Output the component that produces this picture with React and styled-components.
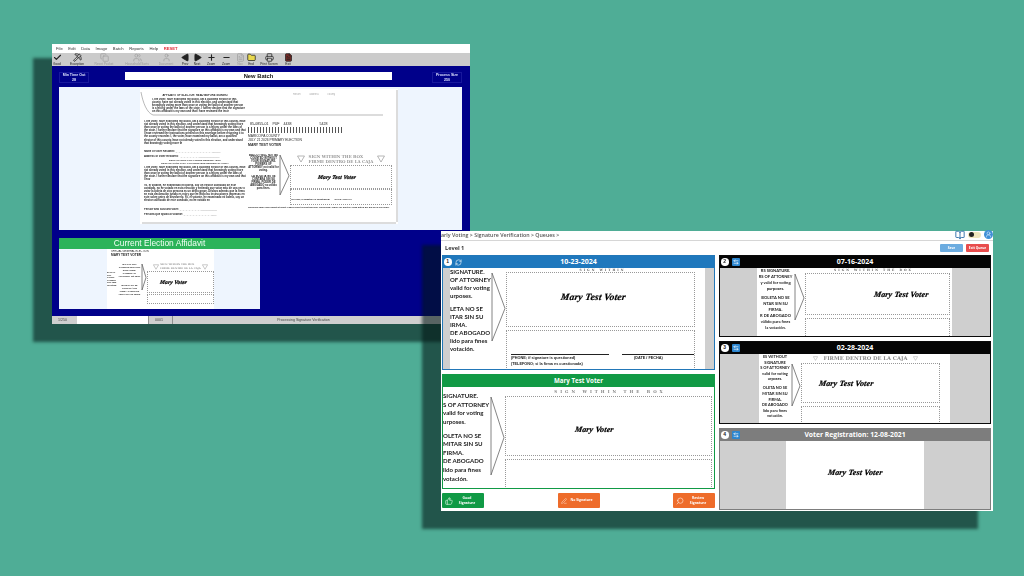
import React from 'react';
import styled, { createGlobalStyle } from 'styled-components';
import {
  ArrowLeftRight,
  BookOpen,
  Check,
  Copy,
  FileText,
  Folder,
  Minus,
  PenLine,
  Pickaxe,
  Play,
  Plus,
  Printer,
  RefreshCw,
  Search,
  ThumbsUp,
  User,
  UserRound,
  Users,
} from 'lucide-react';

const GlobalStyle = createGlobalStyle`
  html, body {
    margin: 0;
    padding: 0;
    background: #4fad96;
    overflow: hidden;
  }
  * {
    box-sizing: border-box;
  }
`;

const Canvas = styled.div`
  position: relative;
  width: 1024px;
  height: 576px;
  background: #4fad96;
  font-family: 'Open Sans', 'Liberation Sans', sans-serif;
  overflow: hidden;
`;

/* the two windows sit on the backdrop like windows on a desktop */
const Window = styled.div`
  position: absolute;
  left: ${(p) => p.$x}px;
  top: ${(p) => p.$y}px;
  width: ${(p) => p.$w}px;
  height: ${(p) => p.$h}px;
  display: flex;
  flex-direction: column;
  background: #fff;
  box-shadow: -17px 16px 3px 2px rgba(2, 22, 20, 0.58);
  filter: blur(0.3px);
`;

/* legacy desktop app */
const MenuBar = styled.div`
  height: 9px;
  flex: none;
  display: flex;
  align-items: center;
  gap: 5.6px;
  padding-left: 4px;
  background: #fff;
  font: 4.2px 'Liberation Sans', sans-serif;
  color: #333;
`;

const MenuItem = styled.span`
  color: ${(p) => (p.$danger ? '#e0323c' : '#333')};
  font-weight: ${(p) => (p.$danger ? 700 : 400)};
`;

const Toolbar = styled.div`
  height: 13px;
  flex: none;
  display: flex;
  background: #cbcbcb;
`;

const ToolButton = styled.div`
  width: 24px;
  flex: none;
  margin-left: ${(p) => p.$shift}px;
  display: flex;
  flex-direction: column;
  align-items: center;
  justify-content: flex-end;
  font: 3.2px/4px 'Liberation Sans', sans-serif;
  white-space: nowrap;
  color: ${(p) => (p.$off ? '#9a9a9a' : '#222')};
`;

const BlueArea = styled.div`
  flex: 1;
  display: flex;
  flex-direction: column;
  padding: 6px 8px 8px 7px;
  background: #00008a;
  min-height: 0;
`;

const BatchHeader = styled.div`
  height: 15px;
  flex: none;
  display: flex;
  align-items: flex-start;
  justify-content: space-between;
`;

const CounterBox = styled.div`
  width: 30px;
  height: 11px;
  display: flex;
  flex-direction: column;
  align-items: center;
  border: 1px solid #18189c;
  color: #dfe4ff;
  font: 700 3.6px/5px 'Liberation Sans', sans-serif;
`;

const BatchTitle = styled.div`
  width: 267px;
  height: 8px;
  margin-right: 4px;
  background: #fff;
  color: #111;
  text-align: center;
  font: 700 5.8px/8px 'Liberation Sans', sans-serif;
`;

const DocArea = styled.div`
  height: 143px;
  flex: none;
  padding: 2px 0 0 81px;
  background: #eef5fe;
`;

const Page = styled.div`
  position: relative;
  width: 258px;
  height: 135px;
  display: flex;
  gap: 2px;
  padding: 4px 6px 2px 4px;
  background: #fff;
  overflow: hidden;
  filter: blur(0.2px);
`;

const Flap = styled.svg`
  position: absolute;
  left: 0;
  top: 0;
`;

const PageLeft = styled.div`
  width: 102px;
  flex: none;
  display: flex;
  flex-direction: column;
  gap: 1px;
`;

const PageRight = styled.div`
  flex: 1;
  display: flex;
  flex-direction: column;
  min-width: 0;
`;

const Fine = styled.div`
  height: ${(p) => p.$h}px;
  flex: none;
  margin-left: ${(p) => p.$inset || 0}px;
  margin-top: ${(p) => p.$top || 0}px;
  overflow: hidden;
  font: ${(p) => p.$weight || 700} ${(p) => p.$size || 2.7}px/${(p) => p.$lh || 3.1}px 'Liberation Sans', sans-serif;
  text-align: ${(p) => p.$align || 'left'};
  white-space: ${(p) => (p.$nowrap ? 'nowrap' : 'normal')};
  word-spacing: ${(p) => p.$words || 0}px;
  color: ${(p) => p.$color || '#222'};
`;

const GapSpan = styled.span`
  margin-left: ${(p) => p.$gap}px;
`;

const Barcode = styled.div`
  width: 96px;
  height: 6px;
  margin-top: 1px;
  background: repeating-linear-gradient(90deg, #555 0 1px, #fff 1px 1.6px, #444 1.6px 2.2px, #fff 2.2px 3px);
`;

const SignRow = styled.div`
  display: flex;
  margin-top: 6px;
`;

const SignNote = styled.div`
  width: ${(p) => p.$w}px;
  flex: none;
  display: flex;
  flex-direction: column;
  gap: 3px;
`;

const SignBoxColumn = styled.div`
  flex: 1;
  display: flex;
  flex-direction: column;
  align-items: center;
`;

const CaptionRow = styled.div`
  display: flex;
  gap: ${(p) => p.$gap}px;
  align-items: center;
`;

const BoxCaption = styled.div`
  font: 700 ${(p) => p.$size || 4}px/${(p) => (p.$size || 4) + 1}px 'DejaVu Serif', 'Liberation Serif', serif;
  color: #9a9a9a;
  white-space: nowrap;
`;

const SignBox = styled.div`
  display: ${(p) => (p.$block ? 'block' : 'flex')};
  align-items: center;
  justify-content: ${(p) => p.$justify || 'center'};
  padding: ${(p) => p.$padTop || 0}px ${(p) => p.$pad || 0}px 0;
  width: 100%;
  height: ${(p) => p.$h}px;
  flex: none;
  margin-top: ${(p) => p.$top || 0}px;
  background: #fff;
  border: 1.5px dotted #999;
  overflow: hidden;
`;

const Signature = styled.span`
  font: italic 700 ${(p) => p.$size}px 'Liberation Serif', serif;
  -webkit-text-stroke: 0.22px #000;
  letter-spacing: 0.02em;
  white-space: nowrap;
  color: #000;
  margin-top: ${(p) => p.$dy || 0}px;
  transform: skewX(-8deg);
`;

const ThumbPanel = styled.div`
  width: 201px;
  height: 71px;
  margin-top: 8px;
  flex: none;
  display: flex;
  flex-direction: column;
  background: #eef5fe;
  overflow: hidden;
`;

const ThumbHeader = styled.div`
  height: 11px;
  flex: none;
  background: #2cb35a;
  color: #f2fff5;
  text-align: center;
  font: 8.4px/11px 'Liberation Sans', sans-serif;
`;

const ThumbPage = styled.div`
  width: 107px;
  height: 60px;
  margin-left: 48px;
  padding-top: 1px;
  background: #fff;
  overflow: hidden;
`;

const ThumbRow = styled.div`
  display: flex;
  margin-top: 5px;
`;

const StatusBar = styled.div`
  height: 8px;
  flex: none;
  display: flex;
  align-items: stretch;
  background: #cfcfcf;
  color: #444;
  font: 3.6px/8px 'Liberation Sans', sans-serif;
`;

const StatusCell = styled.div`
  width: ${(p) => (p.$w ? `${p.$w}px` : 'auto')};
  flex: ${(p) => (p.$w ? 'none' : 1)};
  background: ${(p) => (p.$white ? '#fff' : 'transparent')};
  border-left: ${(p) => (p.$rule ? '1px solid #8f8f8f' : 'none')};
  padding-left: ${(p) => p.$pad || 0}px;
  padding-right: ${(p) => p.$padEnd || 0}px;
  text-align: ${(p) => (p.$center ? 'center' : 'left')};
`;

/* web queue app */
const CrumbBar = styled.div`
  height: 10px;
  flex: none;
  display: flex;
  align-items: center;
  justify-content: space-between;
  border-bottom: 1px solid #d6d6d6;
  color: #555;
  font: 600 5.3px/9px 'Open Sans', sans-serif;
  white-space: nowrap;
`;

const CrumbTools = styled.div`
  display: flex;
  align-items: center;
  gap: 3px;
  margin-top: -2px;
`;

const ThemePill = styled.span`
  width: 13px;
  height: 6px;
  border-radius: 3px;
  background: #efe6bd;
  display: flex;
  align-items: center;
  padding-left: 1px;
`;

const PillKnob = styled.span`
  width: 5px;
  height: 5px;
  border-radius: 50%;
  background: #222;
`;

const UserDot = styled.span`
  width: 9px;
  height: 9px;
  border-radius: 50%;
  background: #3f8fd6;
  display: flex;
  align-items: center;
  justify-content: center;
`;

const LevelRow = styled.div`
  height: 14px;
  flex: none;
  display: flex;
  align-items: center;
  justify-content: space-between;
  padding: 0 4px;
`;

const LevelLabel = styled.div`
  font: 700 5.6px 'Open Sans', sans-serif;
  color: #333;
`;

const HeaderActions = styled.div`
  display: flex;
  gap: 3px;
`;

const SmallAction = styled.div`
  width: 23px;
  height: 8px;
  border-radius: 1px;
  background: ${(p) => p.$bg};
  color: #fff;
  text-align: center;
  font: 700 3.2px/8px 'Open Sans', sans-serif;
`;

const QueueGrid = styled.div`
  flex: 1;
  display: grid;
  grid-template-columns: 273px 272px;
  column-gap: 4px;
  padding-left: 1px;
  min-height: 0;
`;

const QueueColumn = styled.div`
  display: flex;
  flex-direction: column;
  gap: 4px;
`;

const Panel = styled.div`
  height: ${(p) => p.$h}px;
  flex: none;
  display: flex;
  flex-direction: column;
  border: ${(p) => p.$edge || 1}px solid ${(p) => p.$tone};
  background: #cfcfcf;
  overflow: hidden;
`;

const PanelHeader = styled.div`
  position: relative;
  height: 12px;
  flex: none;
  background: ${(p) => p.$tone};
  color: #fff;
  text-align: center;
  font: 700 ${(p) => p.$size || 6.6}px/12px 'Open Sans', sans-serif;
`;

const HeaderBadges = styled.div`
  position: absolute;
  left: 1px;
  top: 2px;
  display: flex;
  gap: 3px;
`;

const NumberBadge = styled.span`
  width: 7.5px;
  height: 7.5px;
  border-radius: 50%;
  background: #fff;
  color: #222;
  text-align: center;
  font: 700 5px/7.5px 'Liberation Sans', sans-serif;
`;

const SwapBadge = styled.span`
  width: 8px;
  height: 8px;
  border-radius: 1px;
  background: ${(p) => (p.$plain ? 'transparent' : '#2d86cf')};
  display: flex;
  align-items: center;
  justify-content: center;
`;

const PanelBody = styled.div`
  flex: 1;
  min-height: 0;
  display: flex;
  justify-content: center;
  padding: 0 ${(p) => p.$right || 0}px 0 ${(p) => p.$left || 0}px;
`;

const Scan = styled.div`
  flex: 1;
  min-width: 0;
  display: flex;
  flex-direction: column;
  align-items: ${(p) => (p.$center ? 'center' : 'stretch')};
  justify-content: ${(p) => (p.$center ? 'center' : 'flex-start')};
  background: #fff;
  overflow: hidden;
  padding-right: ${(p) => p.$pad || 0}px;
`;

const ScanTop = styled.div`
  height: ${(p) => p.$h}px;
  flex: none;
  overflow: hidden;
  display: flex;
  align-items: center;
  justify-content: center;
  gap: 6px;
  padding-left: ${(p) => p.$shift || 0}px;
  white-space: nowrap;
  letter-spacing: ${(p) => p.$spacing || 0}px;
  color: ${(p) => p.$color || '#666'};
  font: 700 ${(p) => p.$size}px/${(p) => p.$h}px 'DejaVu Serif', 'Liberation Serif', serif;
`;

const ScanRow = styled.div`
  flex: 1;
  min-height: 0;
  display: flex;
`;

const Instructions = styled.div`
  width: ${(p) => p.$w}px;
  flex: none;
  margin-top: ${(p) => p.$top || 0}px;
  font: 700 ${(p) => p.$size}px/${(p) => p.$lh}px 'Lato', 'Open Sans', sans-serif;
  color: #222;
  white-space: nowrap;
  text-align: ${(p) => p.$align || 'left'};
`;

const InstructionGap = styled.div`
  height: ${(p) => p.$h}px;
`;

const ArrowMark = styled.svg`
  flex: none;
`;

const BoxStack = styled.div`
  flex: 1;
  min-width: 0;
  display: flex;
  flex-direction: column;
`;

const PhoneRow = styled.div`
  display: flex;
  justify-content: space-between;
  padding-left: 4px;
  font: 700 3.8px/6px 'Liberation Sans', sans-serif;
  color: #222;
`;

const PhoneCell = styled.div`
  width: ${(p) => p.$w}px;
  border-top: 0.8px solid #222;
  padding-left: ${(p) => p.$inset || 0}px;
  white-space: nowrap;
`;

const FooterBar = styled.div`
  display: flex;
  justify-content: space-between;
  height: 15px;
  width: 273px;
`;

const DecisionButton = styled.div`
  width: 42px;
  height: 15px;
  display: flex;
  align-items: center;
  justify-content: space-between;
  padding: 0 3px;
  border-radius: 1px;
  background: ${(p) => p.$bg};
  color: #fff;
  text-align: center;
  font: 700 3.4px/4.8px 'Open Sans', sans-serif;
`;

const DecisionLabel = styled.span`
  flex: 1;
`;

const tools = [
  { c: 57, label: 'Good', Icon: Check, stroke: 3 },
  { c: 77, label: 'Exception', Icon: Pickaxe },
  { c: 104, label: 'Reset Pocket', Icon: Copy, off: true },
  { c: 137, label: 'Household Sorts', Icon: Users, off: true },
  { c: 166, label: 'Document', Icon: User, off: true },
  { c: 185, label: 'Prev', Icon: Play, flip: true, fill: true },
  { c: 197, label: 'Next', Icon: Play, fill: true },
  { c: 211, label: 'Zoom', Icon: Plus, stroke: 3 },
  { c: 226, label: 'Zoom', Icon: Minus, stroke: 3 },
  { c: 240, label: 'Nav', Icon: FileText, off: true },
  { c: 251, label: 'End', Icon: Folder, tint: '#e8d84f' },
  { c: 269, label: 'Print Screen', Icon: Printer },
  { c: 288, label: 'Exit', Icon: FileText, tint: '#7a2b26' },
];

const oath =
  'I, the voter, have examined my ballot, am a qualified elector of this county, have not already voted in this election, and understand that knowingly voting more than once or voting the ballot of another person is a felony under the laws of the state. I further declare that the signature on this affidavit is my own and that I have reviewed the instructions printed on this envelope before returning it to the county recorder. ';

const spanishOath =
  'Yo, el votante, he examinado mi boleta, soy un elector calificado de este condado, no he votado en esta elección y entiendo que votar más de una vez o votar la boleta de otra persona es un delito grave. Declaro además que la firma en esta declaración jurada es mía y que he leído las instrucciones impresas en este sobre antes de devolverlo. ';

// take as many characters as the block on the scan has room for
const fill = (text, n) => text.repeat(Math.ceil(n / text.length)).slice(0, n);

const Arrow = ({ w, h }) => (
  <ArrowMark width={w} height={h} viewBox={`0 0 ${w} ${h}`}>
    <path d={`M1 1 L${w - 1} ${h * 0.52} L1 ${h - 1} Z`} fill="none" stroke="#666" strokeWidth="0.8" />
  </ArrowMark>
);

const Triangle = ({ size = 8 }) => (
  <svg width={size} height={size} viewBox="0 0 8 8">
    <path d="M0.5 1 H7.5 L4 7 Z" fill="none" stroke="#999" strokeWidth="0.7" />
  </svg>
);

const Badges = ({ n, plain }) => (
  <HeaderBadges>
    <NumberBadge>{n}</NumberBadge>
    <SwapBadge $plain={plain}>
      {plain ? <RefreshCw size={7} color="#fff" /> : <ArrowLeftRight size={6} color="#fff" strokeWidth={2.5} />}
    </SwapBadge>
  </HeaderBadges>
);

// cropped scan of the signature part of an envelope
const SigCrop = ({ lines, spacer, align, textW, textSize, lh, textTop, arrowW, arrowH, boxH, box2H, top, sigSize, sigDy, name = 'Mary Test Voter', justify, pad, boxPad, phone }) => (
  <Scan $pad={boxPad}>
    {top}
    <ScanRow>
      <Instructions $w={textW} $size={textSize} $lh={lh} $top={textTop} $align={align}>
        {lines.map((l, i) => (
          <React.Fragment key={l}>
            {i === spacer && <InstructionGap $h={lh * 0.6} />}
            <div>{l}</div>
          </React.Fragment>
        ))}
      </Instructions>
      <Arrow w={arrowW} h={arrowH} />
      <BoxStack>
        <SignBox $h={boxH} $justify={justify} $pad={pad}>
          <Signature $size={sigSize} $dy={sigDy}>{name}</Signature>
        </SignBox>
        <SignBox $h={box2H} $top={3} $block $padTop={box2H - 17}>
          {phone && (
            <PhoneRow>
              <PhoneCell $w={98}>
                (PHONE; if signature is questioned)
                <br />
                (TELEFONO; si la firma es cuestionada)
              </PhoneCell>
              <PhoneCell $w={72} $inset={12}>(DATE / FECHA)</PhoneCell>
            </PhoneRow>
          )}
        </SignBox>
      </BoxStack>
    </ScanRow>
  </Scan>
);

const BatchWindow = () => (
  <Window $x={52} $y={44} $w={418} $h={280}>
    <MenuBar>
      {['File', 'Edit', 'Data', 'Image', 'Batch', 'Reports', 'Help'].map((m) => (
        <MenuItem key={m}>{m}</MenuItem>
      ))}
      <MenuItem $danger>RESET</MenuItem>
    </MenuBar>
    <Toolbar>
      {tools.map(({ c, label, Icon, stroke, off, flip, fill: solid, tint }, i) => (
        <ToolButton key={`${label}${c}`} $shift={i === 0 ? c - 52 - 12 : c - tools[i - 1].c - 24} $off={off}>
          <Icon
            size={9}
            strokeWidth={stroke || 2}
            color={off ? '#a0a0a0' : '#222'}
            fill={solid ? '#222' : tint || 'none'}
            transform={flip ? 'scale(-1 1)' : undefined}
          />
          {label}
        </ToolButton>
      ))}
    </Toolbar>
    <BlueArea>
      <BatchHeader>
        <CounterBox>
          <span>Min Time Out</span>
          <span>28</span>
        </CounterBox>
        <BatchTitle>New Batch</BatchTitle>
        <CounterBox>
          <span>Process Size</span>
          <span>250</span>
        </CounterBox>
      </BatchHeader>
      <DocArea>
        <Page>
          <Flap width="258" height="135" viewBox="0 0 258 135">
            <path
              d="M1 3 C3 14 7 24 13 26 H243 M257 1 V133 M2 134 H256"
              fill="none"
              stroke="#8a8a8a"
              strokeWidth="0.6"
            />
          </Flap>
          <PageLeft>
            <Fine $h={3} $size={2.7} $align="center" $top={1}>
              AFFIDAVIT OF ELECTOR: READ BEFORE SIGNING
            </Fine>
            <Fine $h={19} $inset={8}>{fill(oath, 350)}</Fine>
            <Fine $h={28} $top={2}>{fill(oath, 590)}</Fine>
            <Fine $h={3} $top={1} $nowrap>Name of Voter Resident: ______________________________</Fine>
            <Fine $h={3} $top={1} $nowrap>Address of Voter Resident: ___________________________</Fine>
            <Fine $h={6} $align="center" $size={2.4}>
              DECLARATION FOR VOTERS NEEDING HELP
              <br />
              DECLARACIÓN PARA VOTANTES QUE NECESITAN AYUDA
            </Fine>
            <Fine $h={15.6}>{fill(oath, 330)}</Fine>
            <Fine $h={22} $top={1}>{fill(spanishOath, 440)}</Fine>
            <Fine $h={3} $top={1} $nowrap>Person who assisted voter: _________________________</Fine>
            <Fine $h={3} $top={1} $nowrap>Persona que ayudó al votante: ______________________</Fine>
          </PageLeft>
          <PageRight>
            <Fine $h={29} $inset={45} $size={2.6} $weight={400} $color="#aaa" $nowrap $words={8}>
              Return address county
            </Fine>
            <Fine $h={4} $size={3.6} $lh={4} $nowrap $inset={2} $weight={400} $words={3}>
              85-0855-01 PUF 4438 <GapSpan $gap={24}>5428</GapSpan>
            </Fine>
            <Barcode />
            <Fine $h={4} $size={3.3} $lh={4} $nowrap $top={1} $weight={400}>MARICOPA COUNTY</Fine>
            <Fine $h={4} $size={3.3} $lh={4} $nowrap $weight={400}>JULY 21 2026 PRIMARY ELECTION</Fine>
            <Fine $h={5} $size={3.5} $lh={5} $nowrap $top={1}>MARY TEST VOTER</Fine>
            <SignRow>
              <SignNote $w={31}>
                <Fine $h={18} $size={2.7} $align="center">
                  BALLOT WILL NOT BE COUNTED WITHOUT YOUR SIGNATURE. POWERS OF ATTORNEY not valid for voting.
                </Fine>
                <Fine $h={18} $size={2.7} $align="center">
                  LA BOLETA NO SE CONTARÁ SIN SU FIRMA. PODER DE ABOGADO no válido para fines.
                </Fine>
              </SignNote>
              <Arrow w={11} h={42} />
              <SignBoxColumn>
                <CaptionRow $gap={4}>
                  <Triangle />
                  <div>
                    <BoxCaption>SIGN WITHIN THE BOX</BoxCaption>
                    <BoxCaption>FIRME DENTRO DE LA CAJA</BoxCaption>
                  </div>
                  <Triangle />
                </CaptionRow>
                <SignBox $h={24} $top={1} $justify="flex-start" $pad={27}>
                  <Signature $size={5.6}>Mary Test Voter</Signature>
                </SignBox>
                <SignBox $h={16} $block $padTop={8}>
                  <Fine $h={5} $size={2.3} $lh={2.6} $nowrap>(PHONE; if signature is questioned) &nbsp; &nbsp; &nbsp; (DATE / FECHA)</Fine>
                </SignBox>
              </SignBoxColumn>
            </SignRow>
            <Fine $h={6} $size={2.4} $lh={3} $top={1}>
              URGENT: Mail your ballot at least 7 days prior to Election Day. URGENTE: Envíe su boleta 7 días antes del día de la elección.
            </Fine>
          </PageRight>
        </Page>
      </DocArea>
      <ThumbPanel>
        <ThumbHeader>Current Election Affidavit</ThumbHeader>
        <ThumbPage>
          <Fine $h={3} $size={2.6} $lh={3} $nowrap $weight={400} $inset={4}>SPECIAL GENERAL ELECTION</Fine>
          <Fine $h={5} $size={3.2} $lh={5} $nowrap $inset={4}>MARY TEST VOTER</Fine>
          <ThumbRow>
            <SignNote $w={11}>
              <Fine $h={40} $size={2} $lh={2.6} $top={8}>
                BALLOT NOT COUNT. POWERS NOT valid for voting.
              </Fine>
            </SignNote>
            <SignNote $w={23}>
              <Fine $h={18} $size={2.2} $lh={3} $align="center">
                BALLOT NOT COUNTED WITHOUT SIGNATURE. POWERS OF ATTORNEY not valid.
              </Fine>
              <Fine $h={18} $size={2.2} $lh={3} $align="center">
                BOLETA NO SE CONTARÁ SIN FIRMA. PODER DE ABOGADO no válido.
              </Fine>
            </SignNote>
            <Arrow w={6} h={28} />
            <SignBoxColumn>
              <CaptionRow $gap={1}>
                <Triangle size={6} />
                <div>
                  <BoxCaption $size={2.5}>SIGN WITHIN THE BOX</BoxCaption>
                  <BoxCaption $size={2.5}>FIRME DENTRO DE LA CAJA</BoxCaption>
                </div>
                <Triangle size={6} />
              </CaptionRow>
              <SignBox $h={22} $top={1} $justify="flex-start" $pad={12}>
                <Signature $size={5.6}>Mary Voter</Signature>
              </SignBox>
              <SignBox $h={10} $top={1} />
            </SignBoxColumn>
          </ThumbRow>
        </ThumbPage>
      </ThumbPanel>
    </BlueArea>
    <StatusBar>
      <StatusCell $w={25} $pad={6}>1/250</StatusCell>
      <StatusCell $w={71} $white />
      <StatusCell $w={24} $rule $pad={6}>0001</StatusCell>
      <StatusCell $rule $center $padEnd={36}>Processing Signature Verification</StatusCell>
    </StatusBar>
  </Window>
);

const QueueWindow = () => (
  <Window $x={441} $y={231} $w={552} $h={280}>
    <CrumbBar>
      <span>arly Voting &gt; Signature Verification &gt; Queues &gt;</span>
      <CrumbTools>
        <BookOpen size={10} color="#2f6fa8" strokeWidth={2.2} />
        <ThemePill>
          <PillKnob />
        </ThemePill>
        <UserDot>
          <UserRound size={7} color="#dff0ff" />
        </UserDot>
      </CrumbTools>
    </CrumbBar>
    <LevelRow>
      <LevelLabel>Level 1</LevelLabel>
      <HeaderActions>
        <SmallAction $bg="#6cace0">Save</SmallAction>
        <SmallAction $bg="#e84c4c">Exit Queue</SmallAction>
      </HeaderActions>
    </LevelRow>
    <QueueGrid>
      <QueueColumn>
        <Panel $tone="#2277b8" $h={115}>
          <PanelHeader $tone="#1f78bd" $size={7}>
            <Badges n="1" plain />
            10-23-2024
          </PanelHeader>
          <PanelBody $left={7} $right={9}>
            <SigCrop
              lines={['SIGNATURE.', 'OF ATTORNEY', 'valid for voting', 'urposes.', 'LETA NO SE', 'ITAR SIN SU', 'IRMA.', 'DE ABOGADO', 'lido para fines', 'votación.']}
              spacer={4}
              textW={41}
              textSize={6}
              lh={8}
              textTop={-4}
              arrowW={15}
              arrowH={70}
              boxH={55}
              box2H={40}
              top={<ScanTop $h={4} $size={3} $shift={60} $spacing={2}>SIGN WITHIN</ScanTop>}
              sigSize={9.5}
              justify="flex-start"
              pad={54}
              sigDy={-6}
              boxPad={10}
              phone
            />
          </PanelBody>
        </Panel>
        <Panel $tone="#119a45" $h={115}>
          <PanelHeader $tone="#119a45" $size={6.2}>Mary Test Voter</PanelHeader>
          <PanelBody>
            <SigCrop
              lines={['SIGNATURE.', 'S OF ATTORNEY', 'valid for voting', 'urposes.', 'OLETA NO SE', 'MITAR SIN SU', 'FIRMA.', 'DE ABOGADO', 'lido para fines', 'votación.']}
              spacer={4}
              textW={47}
              textSize={6.1}
              lh={8.6}
              textTop={-4}
              arrowW={15}
              arrowH={80}
              boxH={60}
              box2H={30}
              top={<ScanTop $h={9} $size={4} $shift={65} $color="#888" $spacing={3}>SIGN WITHIN THE BOX</ScanTop>}
              sigSize={8}
              justify="flex-start"
              pad={69}
              sigDy={6}
              name="Mary Voter"
              boxPad={2}
            />
          </PanelBody>
        </Panel>
        <FooterBar>
          <DecisionButton $bg="#109a45">
            <ThumbsUp size={8} color="#d5f2dc" />
            <DecisionLabel>
              Good
              <br />
              Signature
            </DecisionLabel>
          </DecisionButton>
          <DecisionButton $bg="#ee6c2b">
            <PenLine size={6} color="#ffe2d2" />
            <DecisionLabel>No Signature</DecisionLabel>
          </DecisionButton>
          <DecisionButton $bg="#ee6c2b">
            <Search size={8} color="#ffe2d2" transform="scale(-1 1)" />
            <DecisionLabel>
              Review
              <br />
              Signature
            </DecisionLabel>
          </DecisionButton>
        </FooterBar>
      </QueueColumn>
      <QueueColumn>
        <Panel $tone="#0a0a0a" $edge={1.5} $h={82}>
          <PanelHeader $tone="#050505" $size={7}>
            <Badges n="2" />
            07-16-2024
          </PanelHeader>
          <PanelBody $left={37} $right={38}>
            <SigCrop
              lines={['RS SIGNATURE.', 'RS OF ATTORNEY', 'y valid for voting', 'purposes.', 'BOLETA NO SE', 'NTAR SIN SU', 'FIRMA.', 'R DE ABOGADO', 'válido para fines', 'la votación.']}
              spacer={4}
              align="center"
              textW={37}
              textSize={4.1}
              lh={5.9}
              textTop={-5}
              arrowW={11}
              arrowH={48}
              boxH={42}
              box2H={22}
              top={<ScanTop $h={5} $size={3} $shift={40} $spacing={2}>SIGN WITHIN THE BOX</ScanTop>}
              sigSize={8}
              justify="flex-end"
              pad={20}
              boxPad={2}
            />
          </PanelBody>
        </Panel>
        <Panel $tone="#0a0a0a" $edge={1.5} $h={83}>
          <PanelHeader $tone="#050505" $size={7}>
            <Badges n="3" />
            02-28-2024
          </PanelHeader>
          <PanelBody $left={39} $right={40}>
            <SigCrop
              lines={['ES WITHOUT', 'SIGNATURE', 'S OF ATTORNEY', 'valid for voting', 'urposes.', 'OLETA NO SE', 'MITAR SIN SU', 'FIRMA.', 'DE ABOGADO', 'lido para fines', 'votación.']}
              spacer={5}
              align="center"
              textW={32}
              textSize={3.9}
              lh={5.6}
              textTop={-9}
              arrowW={10}
              arrowH={44}
              boxH={40}
              box2H={22}
              top={
                <ScanTop $h={9} $size={5.2} $shift={32} $color="#888">
                  <Triangle size={5} />
                  FIRME DENTRO DE LA CAJA
                  <Triangle size={5} />
                </ScanTop>
              }
              sigSize={8}
              justify="flex-start"
              pad={17}
              boxPad={10}
            />
          </PanelBody>
        </Panel>
        <Panel $tone="#7d7d7d" $h={82}>
          <PanelHeader $tone="#7d7d7d" $size={6.8}>
            <Badges n="4" />
            Voter Registration: 12-08-2021
          </PanelHeader>
          <PanelBody $left={66} $right={66}>
            <Scan $center>
              <Signature $size={8} $dy={-5}>Mary Test Voter</Signature>
            </Scan>
          </PanelBody>
        </Panel>
      </QueueColumn>
    </QueueGrid>
  </Window>
);

export default function App() {
  return (
    <Canvas>
      <GlobalStyle />
      <BatchWindow />
      <QueueWindow />
    </Canvas>
  );
}
